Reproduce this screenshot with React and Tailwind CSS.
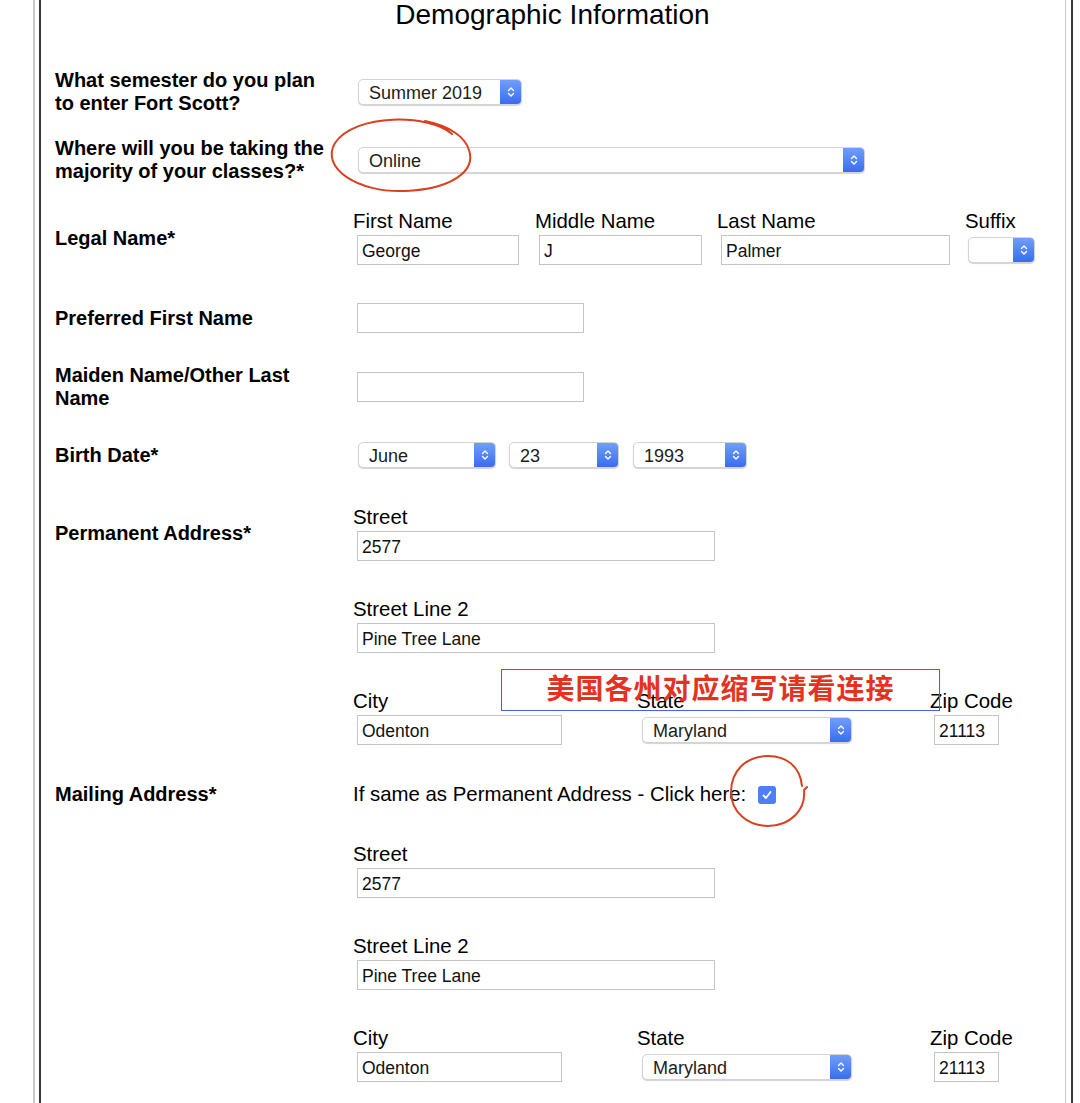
import React from 'react';

/* ── small form pieces ── */
function Chevrons() {
  return (
    <svg width="8" height="12" viewBox="0 0 8 12" fill="none" stroke="white" strokeWidth="1.4" strokeLinecap="round" strokeLinejoin="round">
      <path d="M1.5 4.5 L4 2 L6.5 4.5" />
      <path d="M1.5 7.5 L4 10 L6.5 7.5" />
    </svg>
  );
}

function Select({ value, className = '' }) {
  return (
    <div className={`flex h-[26px] shrink-0 overflow-hidden rounded-[5px] border border-[#d3d3d3] bg-white shadow-[0_1px_1px_rgba(0,0,0,0.18)] ${className}`}>
      <span className="flex-1 pl-[10px] pt-[1px] text-[18px] leading-[24px] text-[#1c1c1c]">{value}</span>
      <span className="-my-px -mr-px flex w-[22px] items-center justify-center rounded-r-[5px] bg-gradient-to-b from-[#72a0fb] to-[#3869ef]">
        <Chevrons />
      </span>
    </div>
  );
}

function Input({ value = '', className = '' }) {
  return (
    <div className={`ml-[4px] h-[30px] shrink-0 border border-[#c4c4c4] pl-[4px] text-[17.5px] leading-[31px] text-[#111] ${className}`}>
      {value}
    </div>
  );
}

const LABEL = 'w-[298px] shrink-0 text-[20px] font-bold leading-[23px] text-black';
const SUB = 'text-[20.4px] leading-[24px] text-black';

function Field({ label, children, className = '' }) {
  return (
    <div className={`shrink-0 ${className}`}>
      <div className={SUB}>{label}</div>
      <div className="mt-[2px] flex h-[30px] items-center">{children}</div>
    </div>
  );
}

function Address({ first, className = '' }) {
  return (
    <>
      <div className={`flex items-center ${className}`}>
        <div className={LABEL}>{first}</div>
        <Field label="Street">
          <Input value="2577" className="w-[358px]" />
        </Field>
      </div>
      <div className="mt-[36px] flex items-center">
        <div className={LABEL} />
        <Field label="Street Line 2">
          <Input value="Pine Tree Lane" className="w-[358px]" />
        </Field>
      </div>
      <div className="mt-[36px] flex items-center">
        <div className={LABEL} />
        <Field label="City" className="w-[284px]">
          <Input value="Odenton" className="w-[205px]" />
        </Field>
        <Field label="State" className="w-[293px]">
          <Select value="Maryland" className="ml-[5px] w-[210px]" />
        </Field>
        <Field label="Zip Code">
          <Input value="21113" className="w-[65px]" />
        </Field>
      </div>
    </>
  );
}

export default function App() {
  return (
    <div className="relative min-h-[1103px] w-[1080px] overflow-hidden bg-white font-['Liberation_Sans','Noto_Sans_CJK_SC',sans-serif] text-black">
      <div className="ml-[33px] min-h-[1103px] w-[1033px] border-l-2 border-r border-[#c9c9c9]">
        <div className="ml-[4px] min-h-[1103px] w-[1034px] border-x-2 border-[#3a3a3a] pl-[14px] pb-[40px]">
          <h1 className="h-[30px] pr-[21px] text-center text-[28px] leading-[30px]">Demographic Information</h1>

          {/* Semester */}
          <div className="mt-[39px] flex items-center">
            <div className={LABEL}>What semester do you plan<br />to enter Fort Scott?</div>
            <Select value="Summer 2019" className="ml-[5px] w-[164px]" />
          </div>

          {/* Location */}
          <div className="mt-[22px] flex items-center">
            <div className={LABEL}>Where will you be taking the<br />majority of your classes?*</div>
            <Select value="Online" className="ml-[5px] w-[507px]" />
          </div>

          {/* Legal name */}
          <div className="mt-[26px] flex items-center">
            <div className={`${LABEL} pt-[3px]`}>Legal Name*</div>
            <Field label="First Name" className="w-[182px]">
              <Input value="George" className="w-[162px]" />
            </Field>
            <Field label="Middle Name" className="w-[182px]">
              <Input value="J" className="w-[163px]" />
            </Field>
            <Field label="Last Name" className="w-[248px]">
              <Input value="Palmer" className="w-[229px]" />
            </Field>
            <Field label="Suffix">
              <Select value="" className="ml-[3px] w-[67px]" />
            </Field>
          </div>

          {/* Preferred */}
          <div className="mt-[38px] flex items-center">
            <div className={LABEL}>Preferred First Name</div>
            <Input className="w-[227px]" />
          </div>

          {/* Maiden */}
          <div className="mt-[31px] flex items-center">
            <div className={LABEL}>Maiden Name/Other Last<br />Name</div>
            <Input className="w-[227px]" />
          </div>

          {/* Birth date */}
          <div className="mt-[32px] flex items-center">
            <div className={LABEL}>Birth Date*</div>
            <Select value="June" className="ml-[5px] w-[138px]" />
            <Select value="23" className="ml-[13px] w-[110px]" />
            <Select value="1993" className="ml-[14px] w-[114px]" />
          </div>

          <Address first="Permanent Address*" className="mt-[37px]" />

          {/* Mailing */}
          <div className="mt-[38px] flex items-center">
            <div className={LABEL}>Mailing Address*</div>
            <span className="text-[20.4px] leading-[23px]">If same as Permanent Address - Click here:</span>
            <span className="ml-[12px] flex h-[18px] w-[18px] items-center justify-center rounded-[3px] bg-[#4d7ff5]">
              <svg width="12" height="12" viewBox="0 0 12 12" fill="none" stroke="white" strokeWidth="1.8" strokeLinecap="round" strokeLinejoin="round">
                <path d="M2.5 6.5 L5 9 L9.5 3" />
              </svg>
            </span>
          </div>

          <Address first="" className="mt-[36px]" />
        </div>
      </div>

      {/* annotation overlay */}
      <div className="absolute left-[501px] top-[669px] flex h-[42px] w-[439px] items-center justify-center border-[1.5px] border-[#4b5fe3] text-[28px] font-bold leading-none tracking-[1px] text-[#e3331f]">
        美国各州对应缩写请看连接
      </div>
      <svg className="pointer-events-none absolute left-0 top-0" width="1080" height="1103" viewBox="0 0 1080 1103" fill="none" stroke="#d8401f" strokeWidth="2" strokeLinecap="round">
        <path d="M452 134 C430 114 355 113 335 143 C320 168 358 193 405 191 C452 189 476 171 469 150 C465 137 450 126 425 121" />
        <path d="M802 786 C800 766 786 756 768 756 C745 756 731 772 731 792 C731 812 748 826 768 826 C790 826 806 810 804 790 L807 787" />
      </svg>
    </div>
  );
}
